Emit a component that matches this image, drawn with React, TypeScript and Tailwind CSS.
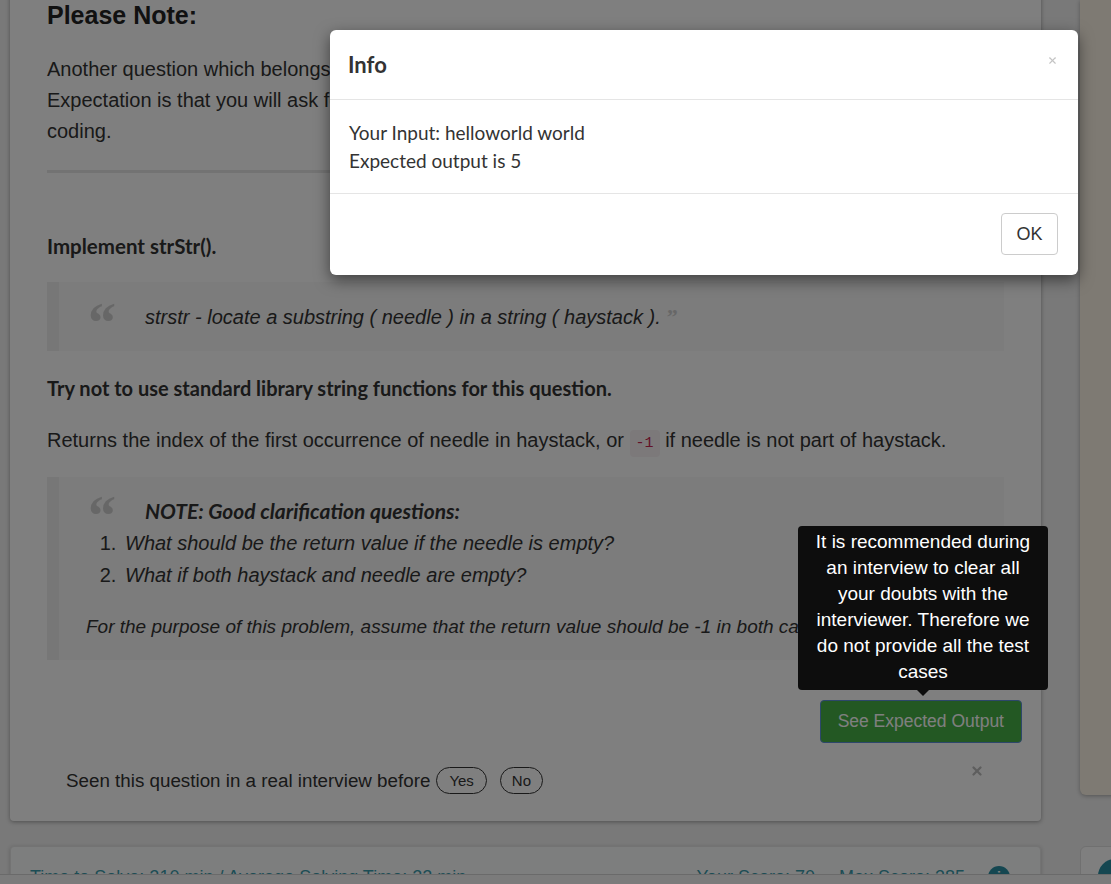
import { X } from "lucide-react";

const arial = "font-['Liberation_Sans',Arial,sans-serif]";
const sans = "font-['Lato','Noto_Sans',sans-serif]";

function Quote({ children, className }: { children: React.ReactNode; className?: string }) {
  return (
    <div className={`border-l-[12px] border-[#eeeeee] bg-[#f8f8f8] ${className ?? ""}`}>
      {children}
    </div>
  );
}

function QuoteMark() {
  return (
    <span className="block h-[26px] w-[30px] shrink-0 overflow-visible font-['Liberation_Serif',serif] text-[56px] leading-[42px] font-bold text-[#cfcfcf]">
      &ldquo;
    </span>
  );
}

export default function App() {
  return (
    <div className={`relative h-[884px] w-full overflow-hidden bg-[#f2f2f2] ${arial}`}>
      <div className="flex gap-[39px] pl-[10px]">
        {/* main column */}
        <div className="flex w-[1031px] shrink-0 flex-col">
          <div className="-mt-[24px] rounded-[4px] bg-white pt-[24px] pb-[27px] shadow-[0_1px_4px_rgba(0,0,0,0.35)]">
            <div className="px-[37px] text-[#333]">
              <h3 className="text-[25px] leading-[30px] font-bold text-[#222]">Please Note:</h3>
              <p className="mt-[24px] text-[20px] leading-[31px]">
                Another question which belongs to the category of questions which are intentionally stated vaguely.
                <br />
                Expectation is that you will ask for correct clarification or you will state your assumptions before you start
                <br />
                coding.
              </p>
              <div className="mt-[23px] h-[3px] bg-[#e6e6e6]" />

              <p className={`mt-[61px] text-[20.5px] leading-[24px] font-bold ${sans}`}>Implement strStr().</p>

              <Quote className="mt-[24px] pt-[20px] pb-[21px]">
                <div className="flex items-start pl-[29px]">
                  <QuoteMark />
                  <span className="ml-[27px] pt-[2px] text-[20px] leading-[26px] italic">
                    strstr - locate a substring ( needle ) in a string ( haystack ).
                    <span className="ml-[6px] font-['Liberation_Serif',serif] text-[22px] leading-none font-bold not-italic text-[#cfcfcf]">
                      &rdquo;
                    </span>
                  </span>
                </div>
              </Quote>

              <p className={`mt-[25px] text-[20px] leading-[24px] font-bold ${sans}`}>
                Try not to use standard library string functions for this question.
              </p>

              <p className="mt-[27px] h-[26px] text-[20px] leading-[26px]">
                Returns the index of the first occurrence of needle in haystack, or{" "}
                <code className="rounded-[4px] bg-[#f9f2f4] px-[6px] py-[5px] font-['Liberation_Mono',monospace] text-[15px] leading-none text-[#c7254e]">
                  -1
                </code>{" "}
                if needle is not part of haystack.
              </p>

              <Quote className="mt-[24px] pt-[18px] pb-[20px] pl-[27px]">
                <div className="flex items-start pl-[2px]">
                  <QuoteMark />
                  <span className={`ml-[27px] pt-[3px] text-[21px] leading-[26px] font-bold italic ${sans}`}>
                    NOTE: Good clarification questions:
                  </span>
                </div>
                <ol className="mt-[3px] ml-[36px] list-decimal text-[20px] leading-[32px] italic">
                  <li className="pl-[3px] marker:not-italic">What should be the return value if the needle is empty?</li>
                  <li className="pl-[3px] marker:not-italic">What if both haystack and needle are empty?</li>
                </ol>
                <p className="mt-[23px] text-[19px] leading-[26px] italic">
                  For the purpose of this problem, assume that the return value should be -1 in both cases.
                </p>
              </Quote>
            </div>

            <div className="mt-[40px] flex justify-end pr-[19px]">
              <button className="h-[43px] rounded-[4px] border border-[#5b8fd6] bg-[#46b046] px-[17px] text-[17.5px] text-white">
                See Expected Output
              </button>
            </div>

            <div className="mt-[24px] flex items-start justify-between pr-[57px] pl-[56px]">
              <div className="flex items-center text-[18.8px] leading-[26px] text-[#333]">
                <span>Seen this question in a real interview before</span>
                <span className="ml-[6px] flex h-[27px] items-center rounded-full border border-[#333] px-[12px] text-[15px]">
                  Yes
                </span>
                <span className="ml-[13px] flex h-[27px] items-center rounded-full border border-[#333] px-[11px] text-[15px]">
                  No
                </span>
              </div>
              <X size={14} strokeWidth={4} className="-mt-[3px] text-[#bdbdbd]" />
            </div>
          </div>

          <div className="mt-[25px] flex items-start justify-between rounded-[4px] border border-[#e6e6e6] bg-[#fbfdfd] pt-[17px] pr-[30px] pl-[19px] text-[18px] leading-[26px] text-[#3a9aaa] shadow-[0_1px_4px_rgba(0,0,0,0.2)]">
            <span>Time to Solve: 210 min / Average Solving Time: 22 min</span>
            <div className="flex items-center gap-[28px]">
              <span>Your Score: 70</span>
              <span className="-ml-[4px]">Max Score: 385</span>
              <span className="-ml-[5px] flex h-[22px] w-[22px] items-center justify-center rounded-full bg-[#2a8ea3] text-[14px] font-bold text-white">
                i
              </span>
            </div>
          </div>
        </div>

        {/* right column */}
        <div className="flex flex-1 flex-col">
          <div className="h-[795px] rounded-bl-[6px] bg-[#fcf4e6] shadow-[0_1px_4px_rgba(0,0,0,0.3)]" />
          <div className="mt-[51px] h-[60px] rounded-tl-[6px] border border-[#e0e0e0] bg-white pt-[12px] pl-[17px]">
            <div className="h-[34px] w-[34px] rounded-full bg-[#2a8ea3]" />
          </div>
        </div>
      </div>

      {/* bottom bar */}
      <div className="absolute right-0 bottom-0 left-0 h-[10px] border-t border-[#d4d4d4] bg-[#f6f6f6]" />

      {/* backdrop */}
      <div className="absolute inset-0 bg-black/50" />

      {/* modal */}
      <div className={`absolute top-[30px] left-[330px] w-[748px] rounded-[6px] bg-white shadow-[0_5px_15px_rgba(0,0,0,0.5)] ${sans}`}>
        <div className="flex h-[70px] items-center justify-between border-b border-[#e5e5e5] pr-[20px] pl-[18px]">
          <h4 className="text-[22px] font-bold text-[#333]">Info</h4>
          <X size={11} strokeWidth={2.5} className="-mt-[8px] text-[#c4c4c4]" />
        </div>
        <div className="border-b border-[#e5e5e5] px-[19px] pt-[19px] pb-[18px] text-[19px] leading-[28px] text-[#333]">
          <div>Your Input: helloworld world</div>
          <div>Expected output is 5</div>
        </div>
        <div className="flex justify-end pt-[19px] pr-[20px] pb-[20px]">
          <button className={`h-[42px] w-[57px] rounded-[4px] border border-[#cccccc] bg-white text-[18px] text-[#333] ${arial}`}>
            OK
          </button>
        </div>
      </div>

      {/* tooltip */}
      <div className="absolute top-[526px] left-[798px] w-[250px]">
        <div className="rounded-[4px] bg-[#0d0d0d] px-[14px] pt-[3px] pb-[5px] text-center text-[19px] leading-[26px] text-white">
          It is recommended during an interview to clear all your doubts with the interviewer. Therefore we do not provide all the test cases
        </div>
        <div className="mx-auto h-0 w-0 border-x-[6px] border-t-[6px] border-x-transparent border-t-[#0d0d0d]" />
      </div>
    </div>
  );
}
